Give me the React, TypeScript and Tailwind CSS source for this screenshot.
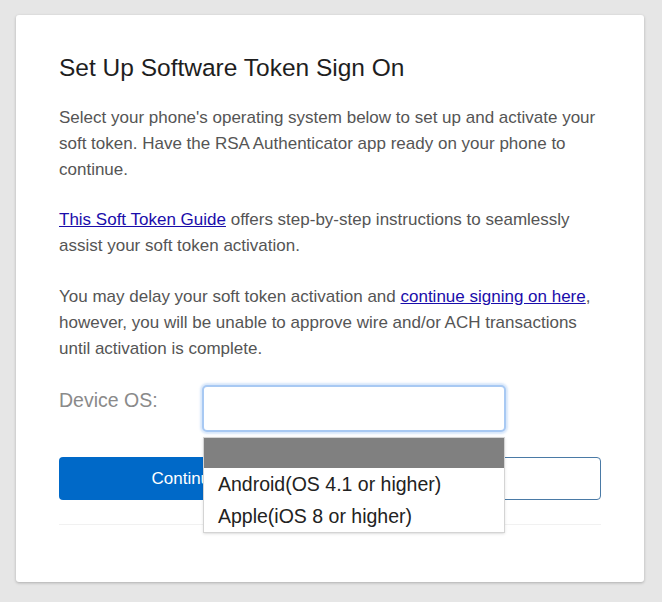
import React from 'react';

const options = ['Android(OS 4.1 or higher)', 'Apple(iOS 8 or higher)'];

export default function App() {
  return (
    <div className="min-h-screen bg-[#e6e6e6] pt-[15px] pl-[16px] font-['Liberation_Sans',Arial,sans-serif]">
      <div className="w-[628px] h-[567px] bg-white rounded-[3px] shadow-[0_1px_3px_rgba(0,0,0,0.25)] px-[43px] pt-[37px]">
        <h1 className="text-[24.5px] leading-[32px] text-[#1e1e1e] mb-[21px]">Set Up Software Token Sign On</h1>

        <div className="text-[17px] leading-[26px] text-[#555]">
          <p className="mb-[24px]">
            Select your phone's operating system below to set up and activate your soft token. Have the RSA Authenticator app ready on your phone to continue.
          </p>
          <p className="mb-[25px]">
            <a href="#" className="text-[#1a0dab] underline">This Soft Token Guide</a> offers step-by-step instructions to seamlessly assist your soft token activation.
          </p>
          <p>
            You may delay your soft token activation and{' '}
            <a href="#" className="text-[#1a0dab] underline">continue signing on here</a>, however, you will be unable to approve wire and/or ACH transactions until activation is complete.
          </p>
        </div>

        {/* device select */}
        <div className="flex items-start mt-[23px]">
          <label className="w-[143px] text-[19.5px] leading-[30px] text-[#8a8a8a]">Device OS:</label>
          <div className="relative">
            <div className="w-[304px] h-[47px] rounded-[5px] border-2 border-[#a8c9f3] shadow-[0_0_2px_2px_rgba(168,201,243,0.45)] bg-white" />
            <div className="absolute left-[1px] top-[52px] w-[302px] bg-white border border-[#d4d4d4] z-10 shadow-sm">
              <div className="h-[30px] bg-[#808080]" />
              {options.map((o) => (
                <div key={o} className="px-[14px] h-[32px] leading-[32px] text-[19.5px] text-[#222]">{o}</div>
              ))}
            </div>
          </div>
        </div>

        <div className="grid grid-cols-2 gap-4 mt-[25px] pb-[24px] border-b border-[#f1f1f1]">
          <button className="h-[43px] rounded-[4px] bg-[#0069c8] text-white text-[17px] pr-[10px]">Continue</button>
          <button className="h-[43px] rounded-[4px] border border-[#4a7aa6] text-[#0069c8] text-[17px] bg-white">Cancel</button>
        </div>
      </div>
    </div>
  );
}
